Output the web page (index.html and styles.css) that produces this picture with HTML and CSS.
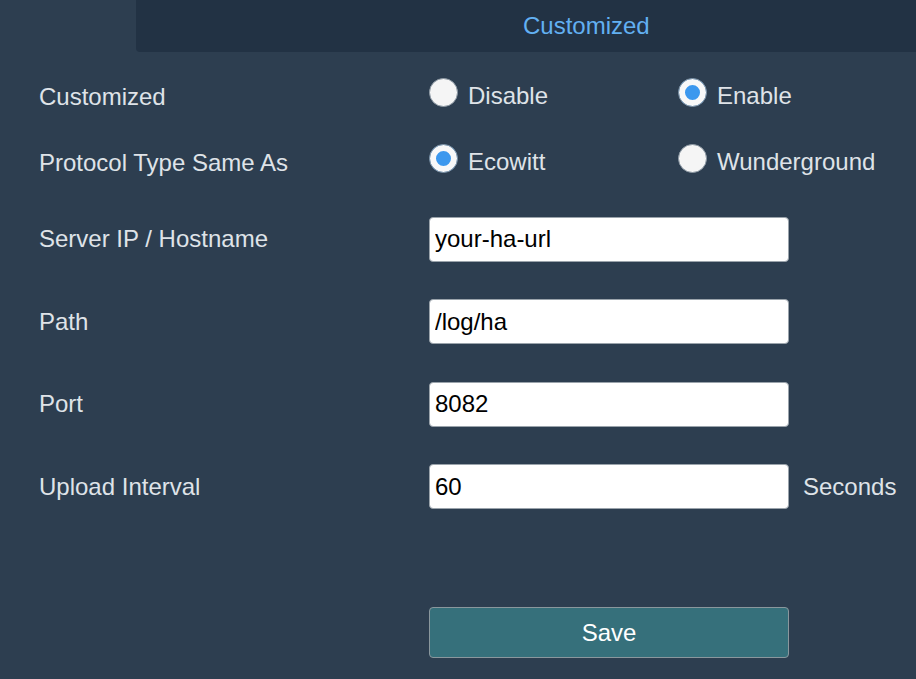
FILE: index.html
```html
<!DOCTYPE html>
<html lang="en">
<head>
<meta charset="utf-8">
<title>Customized</title>
<link rel="stylesheet" href="styles.css">
</head>
<body>
<div class="page">
  <div class="header"><span class="title">Customized</span></div>
  <form class="form">
    <div class="row radio-row">
      <div class="label">Customized</div>
      <label class="option"><input type="radio" name="custom" class="radio"><span>Disable</span></label>
      <label class="option"><input type="radio" name="custom" class="radio" checked><span>Enable</span></label>
    </div>
    <div class="row radio-row">
      <div class="label">Protocol Type Same As</div>
      <label class="option"><input type="radio" name="proto" class="radio" checked><span>Ecowitt</span></label>
      <label class="option"><input type="radio" name="proto" class="radio"><span>Wunderground</span></label>
    </div>
    <div class="row input-row first">
      <div class="label">Server IP / Hostname</div>
      <input class="text" type="text" value="your-ha-url">
    </div>
    <div class="row input-row">
      <div class="label">Path</div>
      <input class="text" type="text" value="/log/ha">
    </div>
    <div class="row input-row">
      <div class="label">Port</div>
      <input class="text" type="text" value="8082">
    </div>
    <div class="row input-row">
      <div class="label">Upload Interval</div>
      <input class="text" type="text" value="60">
      <span class="unit">Seconds</span>
    </div>
    <div class="actions">
      <button type="button" class="save">Save</button>
    </div>
  </form>
</div>
</body>
</html>
```

FILE: styles.css
```css
html, body {
  margin: 0;
  padding: 0;
  background: #2d3e50;
}
body {
  font-family: "Liberation Sans", Arial, sans-serif;
  font-size: 24px;
  color: #dfe3e8;
  width: 916px;
  height: 679px;
  overflow: hidden;
}
.page {
  background: #2d3e50;
  height: 679px;
}
.header {
  margin-left: 136px;
  height: 52px;
  box-sizing: border-box;
  background: #223244;
  border-bottom-left-radius: 4px;
  padding-left: 387px;
  padding-top: 12px;
}
.title {
  color: #62b0f2;
  font-size: 24px;
  line-height: normal;
}
.form {
  padding-left: 39px;
  padding-top: 12px;
}
.row {
  display: flex;
  align-items: center;
}
.label {
  width: 390px;
  flex: none;
  line-height: normal;
}
.radio-row {
  height: 66px;
}
.option {
  width: 249px;
  flex: none;
  display: flex;
  align-items: center;
  margin-bottom: 2px;
  line-height: normal;
}
.radio {
  appearance: none;
  -webkit-appearance: none;
  margin: 0 10px 7px 0;
  width: 29px;
  height: 29px;
  border-radius: 50%;
  background: #f5f5f5;
  border: 1px solid #8b97a2;
  box-sizing: border-box;
  flex: none;
}
.radio:checked {
  background: #3c98ee;
  box-shadow: inset 0 0 0 6px #f8f8f8;
}
.input-row {
  height: 82.5px;
}
.input-row.first {
  margin-top: 2px;
}
.text {
  width: 360px;
  height: 45px;
  box-sizing: border-box;
  border: 1px solid #9aa3ab;
  border-radius: 4px;
  background: #ffffff;
  font-family: "Liberation Sans", Arial, sans-serif;
  font-size: 24px;
  color: #000000;
  padding: 0 5px;
  margin: 0;
  flex: none;
}
.unit {
  margin-left: 14px;
  line-height: normal;
}
.actions {
  padding-left: 390px;
  margin-top: 79px;
}
.save {
  width: 360px;
  height: 51px;
  box-sizing: border-box;
  background: #36707b;
  border: 1px solid #8a979d;
  border-radius: 4px;
  color: #ffffff;
  font-family: "Liberation Sans", Arial, sans-serif;
  font-size: 24px;
  margin: 0;
  padding: 0;
}
```
